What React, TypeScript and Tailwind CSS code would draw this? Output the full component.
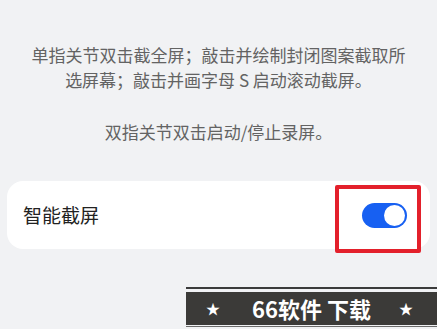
import React from "react";

function Toggle({ on }: { on: boolean }) {
  return (
    <div
      className={
        "w-[45px] h-[25px] rounded-full flex items-center px-[2px] " +
        (on ? "bg-[#1760f2] justify-end" : "bg-gray-300 justify-start")
      }
    >
      <div className="w-[21px] h-[21px] rounded-full bg-white" />
    </div>
  );
}

export default function App() {
  const cjk = { fontFamily: '"Noto Sans CJK SC", "Noto Sans", sans-serif' };
  return (
    <div
      className="relative w-[437px] h-[329px] overflow-hidden bg-[#f1f2f4]"
      style={cjk}
    >
      <div className="pt-[42px] px-[16px] text-center text-[17px] leading-[25px] text-[#636363]">
        <p>
          单指关节双击截全屏；敲击并绘制封闭图案截取所
          <br />
          选屏幕；敲击并画字母 S 启动滚动截屏。
        </p>
        <p className="mt-[27px]">双指关节双击启动/停止录屏。</p>
      </div>

      <div className="mt-[37px] mx-[7px] h-[68px] rounded-[16px] bg-white flex items-center justify-between pl-[16px] pr-[23px]">
        <span className="text-[19px] text-[#222]">智能截屏</span>
        <Toggle on={true} />
      </div>

      {/* red highlight box */}
      <div className="absolute left-[335px] top-[185px] w-[86px] h-[68px] border-[4px] border-[#e3202b] rounded-[2px]" />

      {/* watermark */}
      <div className="absolute left-[186px] top-[287px] w-[251px] h-[42px] flex flex-col">
        <div className="h-[2px] bg-[#3b3b3b]" />
        <div className="h-[3px]" />
        <div className="h-[33px] bg-[#3b3a38] flex items-center text-white">
          <span className="w-[54px] text-center text-[14px]">★</span>
          <span className="ml-[12px] text-[22px] font-bold">66软件 下载</span>
          <span className="flex-1 text-right pr-[24px] text-[14px]">★</span>
        </div>
        <div className="h-[1px] mt-[1px] bg-[#6a6a6a]" />
      </div>
    </div>
  );
}
